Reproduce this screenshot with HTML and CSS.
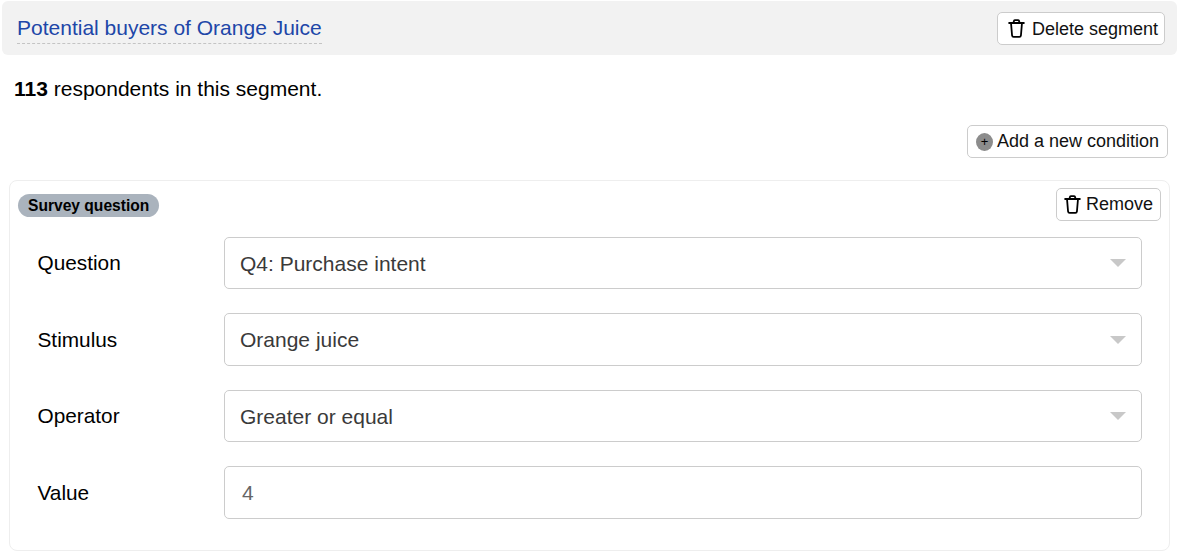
FILE: index.html
```html
<!DOCTYPE html>
<html lang="en">
<head>
    <meta charset="UTF-8">
    <title>Segment</title>
    <link rel="stylesheet" href="styles.css">
</head>
<body>
    <svg class="defs" width="0" height="0">
        <symbol id="trash" viewBox="0 0 16 18">
            <path d="M1 3.800h14M5 3.800 5.600 1.800C5.800 1.200 6.200 1 6.700 1h2.600c.5 0 .9.2 1.100.8l.6 2M2.800 3.800l1 11.800c.1.900.6 1.400 1.400 1.400h5.600c.8 0 1.300-.5 1.400-1.400l1-11.800" fill="none" stroke="currentColor" stroke-width="1.700" stroke-linecap="round" stroke-linejoin="round"/>
        </symbol>
    </svg>

    <header class="segment-head">
        <span class="segment-name">Potential buyers of Orange Juice</span>
        <button class="btn btn-delete"><svg class="trash"><use href="#trash"/></svg><span class="btn-text">Delete segment</span></button>
    </header>

    <p class="count"><b>113</b> respondents in this segment.</p>

    <div class="actions">
        <button class="btn btn-add"><span class="plus">+</span>Add a new condition</button>
    </div>

    <section class="condition">
        <div class="condition-top">
            <span class="badge">Survey question</span>
            <button class="btn btn-remove"><svg class="trash"><use href="#trash"/></svg>Remove</button>
        </div>
        <div class="field">
            <label>Question</label>
            <div class="select">Q4: Purchase intent<i class="caret"></i></div>
        </div>
        <div class="field">
            <label>Stimulus</label>
            <div class="select">Orange juice<i class="caret"></i></div>
        </div>
        <div class="field">
            <label>Operator</label>
            <div class="select">Greater or equal<i class="caret"></i></div>
        </div>
        <div class="field">
            <label>Value</label>
            <div class="select value">4</div>
        </div>
    </section>
</body>
</html>
```

FILE: styles.css
```css
html, body {
    margin: 0;
    background: #fff;
}
body {
    font-family: "Liberation Sans", Arial, sans-serif;
    font-size: 21px;
    color: #000;
    padding: 1px 2px 0;
    height: 552px;
    overflow: hidden;
    box-sizing: border-box;
}
.defs {
    position: absolute;
}
.segment-head {
    display: flex;
    justify-content: space-between;
    align-items: center;
    height: 54px;
    background: #f2f2f2;
    border-radius: 6px;
    padding: 0 12px 0 15px;
    box-sizing: border-box;
}
.segment-name {
    color: #2046a8;
    font-size: 21px;
    line-height: 28px;
    padding-bottom: 1px;
    margin-top: 1px;
    border-bottom: 1px dashed #c4c4c4;
}
.btn {
    display: flex;
    align-items: center;
    height: 33px;
    box-sizing: border-box;
    background: #fff;
    border: 1px solid #ccc;
    border-radius: 5px;
    font-family: inherit;
    font-size: 18px;
    color: #111;
    white-space: nowrap;
    padding: 0 8px;
}
.btn-delete {
    width: 168px;
    padding-left: 10px;
}
.btn-text {
    padding-top: 2px;
}
.trash {
    width: 17px;
    height: 19px;
    flex: none;
    color: #000;
}
.btn-delete .trash {
    margin-right: 7px;
}
.btn-remove {
    width: 105px;
    padding-left: 7px;
}
.btn-remove .trash {
    margin-right: 5px;
}
.count {
    margin: 22px 0 0 12px;
    line-height: 24px;
}
.actions {
    display: flex;
    justify-content: flex-end;
    margin: 24px 9px 0 0;
}
.btn-add {
    width: 201px;
}
.plus {
    display: flex;
    align-items: center;
    justify-content: center;
    width: 18px;
    height: 18px;
    margin-right: 4px;
    border-radius: 50%;
    background: #8c8c8c;
    color: #000;
    font-size: 13px;
    line-height: 1;
}
.condition {
    margin: 21.500px 7px 0;
    height: 371.500px;
    box-sizing: border-box;
    border: 1px solid #eee;
    border-radius: 8px;
    padding: 7.250px 8px 0 8px;
}
.condition-top {
    display: flex;
    justify-content: space-between;
    align-items: flex-start;
    height: 49px;
}
.badge {
    margin-top: 6px;
    height: 23px;
    line-height: 23px;
    padding: 0 10px;
    background: #aab3bd;
    border-radius: 12px;
    font-size: 15.600px;
    font-weight: bold;
}
.field {
    display: flex;
    align-items: center;
    margin: 0 19px 24px 19.500px;
}
.field label {
    width: 186.500px;
    flex: none;
    font-size: 20.800px;
}
.select {
    flex: 1;
    position: relative;
    height: 52.500px;
    line-height: 52px;
    box-sizing: border-box;
    border: 1px solid #ccc;
    border-radius: 5px;
    padding-left: 15px;
    font-size: 21px;
    color: #3a3a3a;
}
.value {
    padding-left: 17px;
    color: #666;
}
.caret {
    position: absolute;
    right: 15px;
    top: 21.500px;
    border: 8px solid transparent;
    border-top: 8px solid #c8c8c8;
    border-bottom: 0;
}
```
